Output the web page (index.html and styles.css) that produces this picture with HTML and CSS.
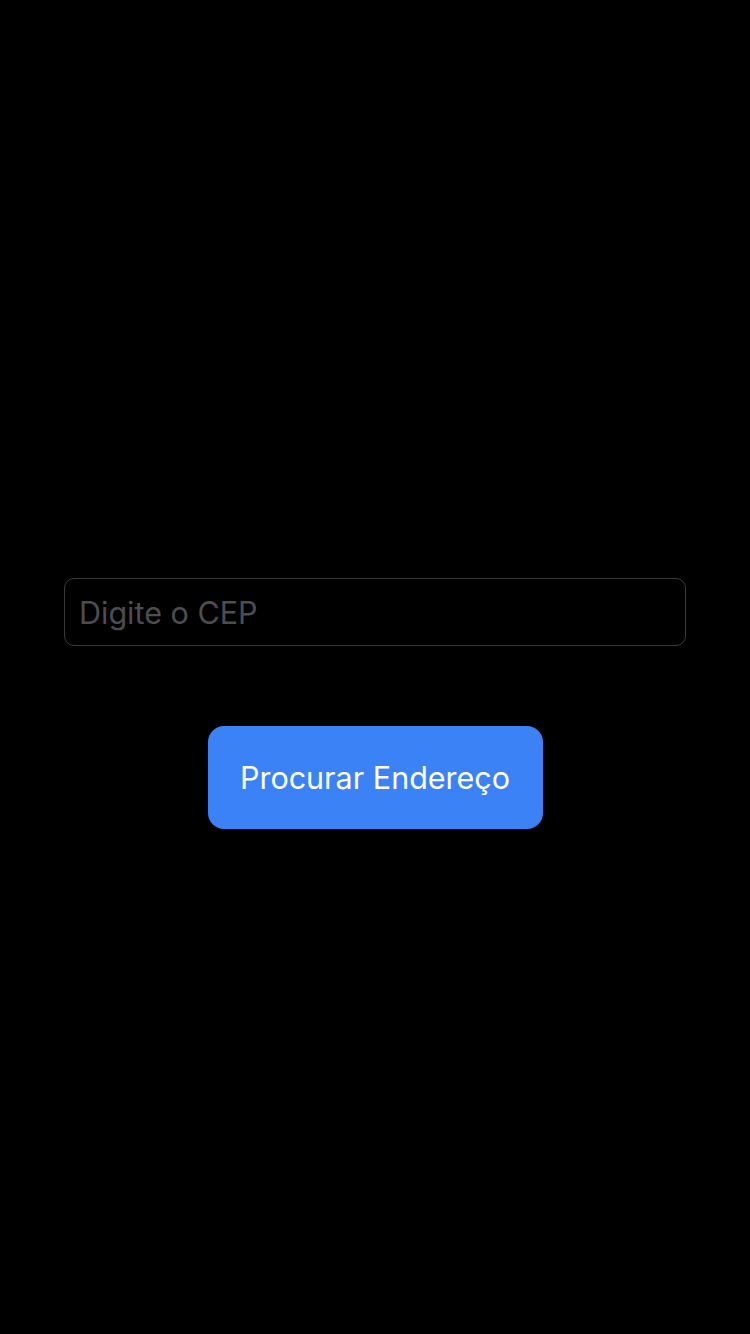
FILE: index.html
```html
<!DOCTYPE html>
<html lang="pt-BR">
<head>
<meta charset="utf-8">
<link rel="stylesheet" href="styles.css">
<title>CEP</title>
</head>
<body>
<main class="screen">
  <input class="cep-input" type="text" placeholder="Digite o CEP">
  <button class="search-btn" type="button">Procurar Endereço</button>
</main>
</body>
</html>
```
FILE: styles.css
```css
html, body {
  margin: 0;
  padding: 0;
  background: #000;
}
.screen {
  width: 750px;
  height: 1334px;
  box-sizing: border-box;
  padding-top: 578px;
  display: flex;
  flex-direction: column;
  align-items: center;
  gap: 80px;
  font-family: Inter, "Noto Sans", sans-serif;
}
.cep-input {
  width: 622px;
  height: 68px;
  box-sizing: border-box;
  margin: 0;
  padding: 0 14px;
  background: #000;
  border: 1px solid #3a3a3c;
  border-radius: 10px;
  color: #fff;
  font-family: inherit;
  font-size: 30.5px;
  outline: none;
}
.cep-input::placeholder {
  color: #4d4d50;
}
.search-btn {
  width: 335px;
  height: 103px;
  margin: 0;
  padding: 0;
  border: none;
  border-radius: 16px;
  background: #3b82f6;
  color: #fff;
  font-family: inherit;
  font-size: 30.5px;
  font-weight: 400;
}
```
